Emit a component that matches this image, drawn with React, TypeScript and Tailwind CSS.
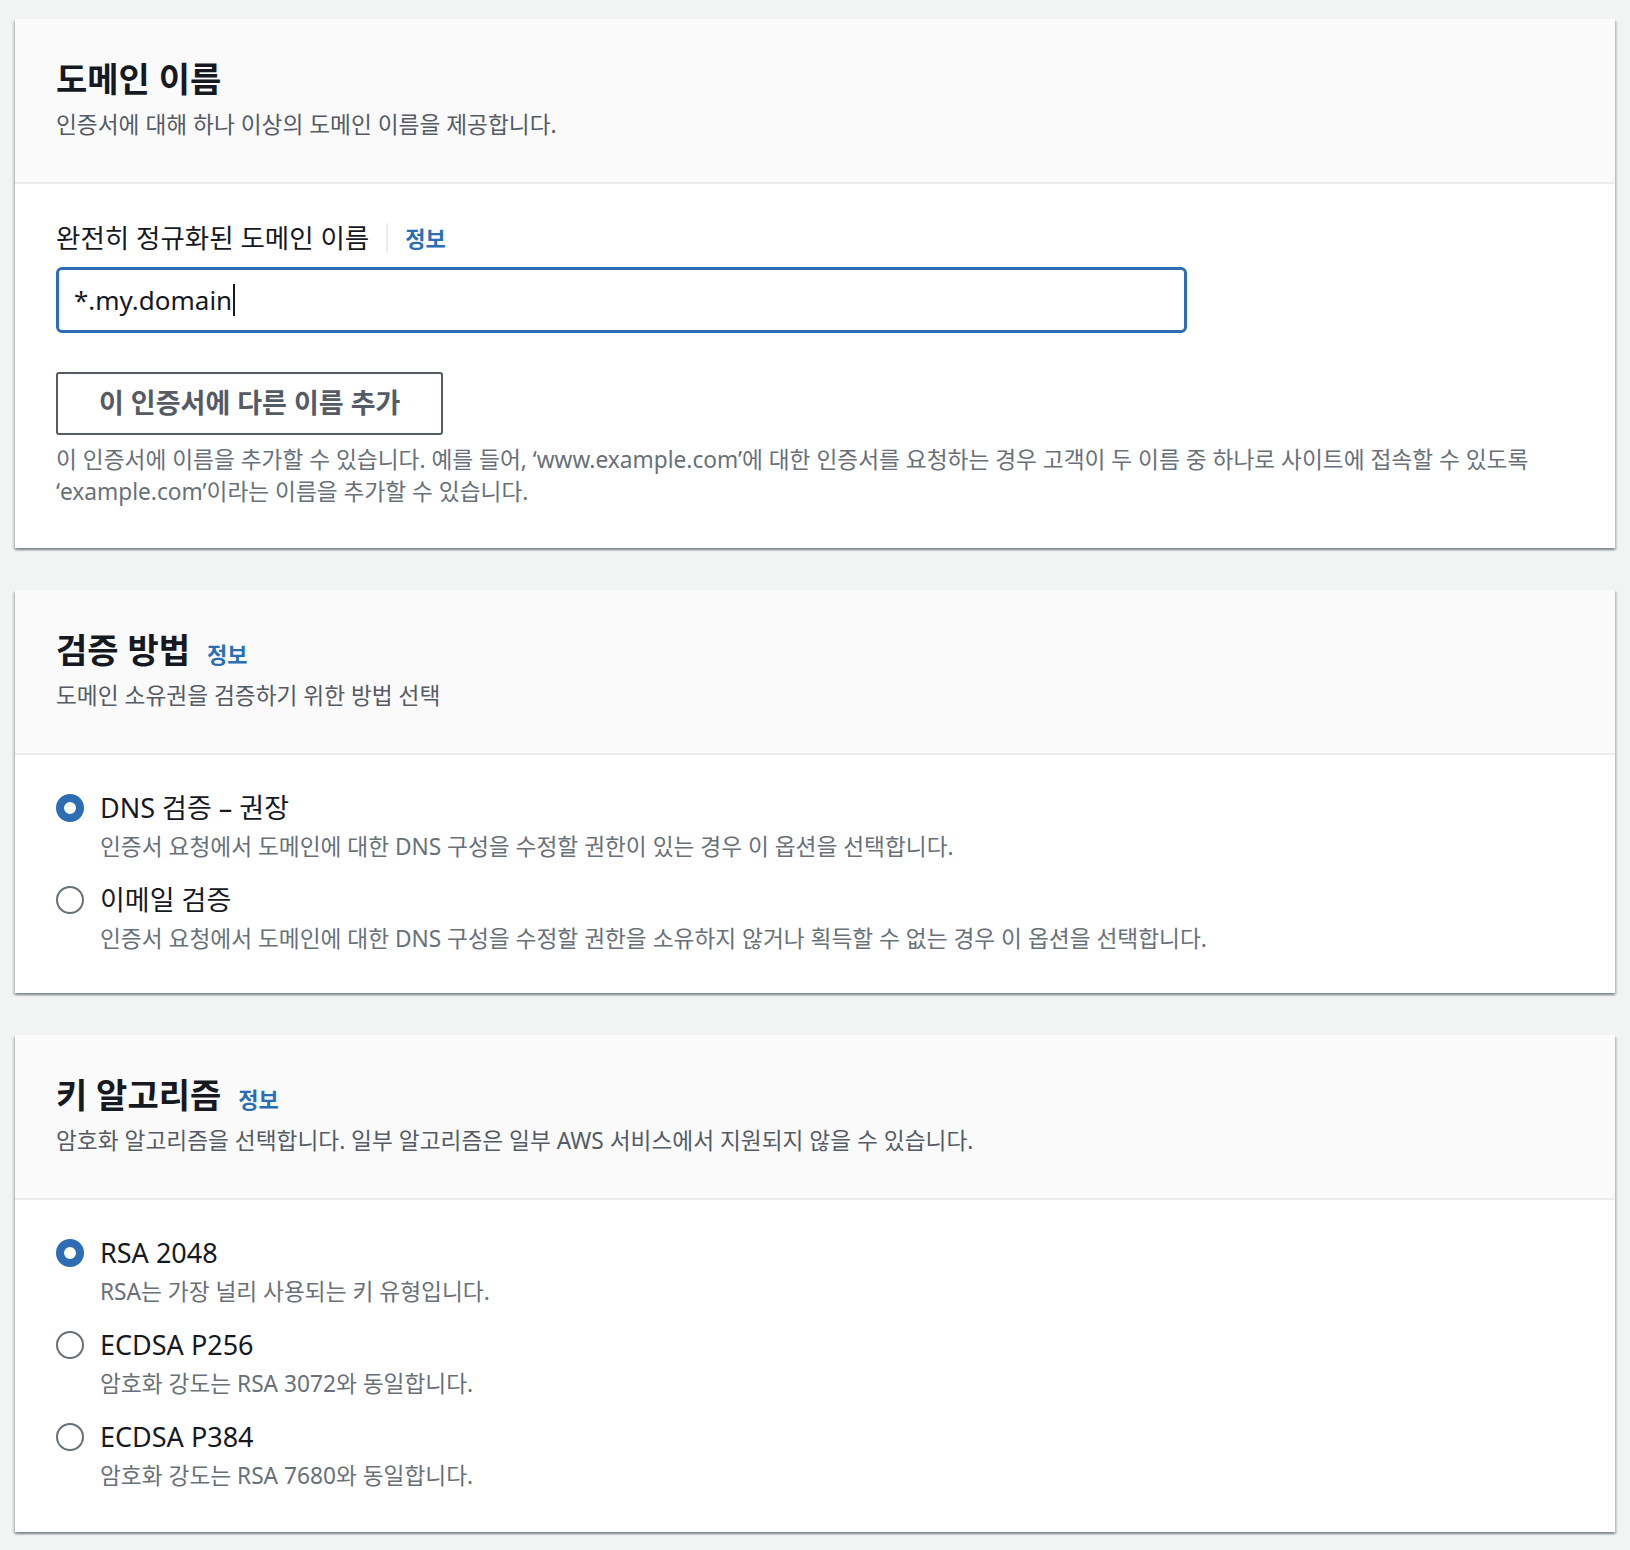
type Option = {
  id: string
  label: string
  description: string
}

const validationOptions: Option[] = [
  {
    id: 'dns',
    label: 'DNS 검증 – 권장',
    description: '인증서 요청에서 도메인에 대한 DNS 구성을 수정할 권한이 있는 경우 이 옵션을 선택합니다.',
  },
  {
    id: 'email',
    label: '이메일 검증',
    description:
      '인증서 요청에서 도메인에 대한 DNS 구성을 수정할 권한을 소유하지 않거나 획득할 수 없는 경우 이 옵션을 선택합니다.',
  },
]

const keyOptions: Option[] = [
  { id: 'rsa', label: 'RSA 2048', description: 'RSA는 가장 널리 사용되는 키 유형입니다.' },
  { id: 'p256', label: 'ECDSA P256', description: '암호화 강도는 RSA 3072와 동일합니다.' },
  { id: 'p384', label: 'ECDSA P384', description: '암호화 강도는 RSA 7680와 동일합니다.' },
]

function InfoLink() {
  return <span className="text-[22px] font-bold leading-[30px] text-[#2a6eb8]">정보</span>
}

function CardHeader({ title, description, info }: { title: string; description: string; info?: boolean }) {
  return (
    <div className="flex flex-col gap-[10px] border-b-2 border-[#eaeded] bg-[#fafafa] px-[41px] pt-[40px] pb-[41px]">
      <div className="flex items-baseline gap-[17px]">
        <h2 className="text-[34px] font-bold leading-[40px] text-[#16191f]">{title}</h2>
        {info && <InfoLink />}
      </div>
      <p className="text-[22.7px] leading-[32px] text-[#545b64]">{description}</p>
    </div>
  )
}

function Card({ children }: { children: React.ReactNode }) {
  return (
    <section className="bg-white shadow-[0_2px_2px_0_rgba(0,28,36,0.3),2px_2px_2px_0_rgba(0,28,36,0.15),-2px_2px_2px_0_rgba(0,28,36,0.15)]">
      {children}
    </section>
  )
}

function RadioGroup({ options, selected }: { options: Option[]; selected: string }) {
  return (
    <div className="flex flex-col gap-[20px]">
      {options.map((opt) => (
        <div key={opt.id} className="flex flex-col gap-[6px]">
          <div className="flex items-center gap-[16px]">
            {opt.id === selected ? (
              <span className="box-border h-[28px] w-[28px] shrink-0 rounded-full border-[8px] border-[#2e6db5] bg-white" />
            ) : (
              <span className="box-border h-[28px] w-[28px] shrink-0 rounded-full border-2 border-[#687078] bg-white" />
            )}
            <span className="text-[27px] leading-[34px] text-[#16191f]">{opt.label}</span>
          </div>
          <p className="pl-[44px] text-[22.7px] leading-[32px] text-[#687078]">{opt.description}</p>
        </div>
      ))}
    </div>
  )
}

export default function App() {
  return (
    <div className="min-h-screen bg-[#f2f3f3] px-[15px] pt-[19px] pb-[19px] font-[family-name:'Noto_Sans','Noto_Sans_CJK_KR',sans-serif]">
      <div className="flex flex-col gap-[42px]">
        {/* Domain name */}
        <Card>
          <CardHeader title="도메인 이름" description="인증서에 대해 하나 이상의 도메인 이름을 제공합니다." />
          <div className="px-[41px] pt-[37px] pb-[40px]">
            <div className="flex items-center">
              <span className="text-[26.5px] leading-[34px] text-[#16191f]">완전히 정규화된 도메인 이름</span>
              <span className="mx-[17px] h-[30px] w-[2px] bg-[#eaeded]" />
              <InfoLink />
            </div>
            <div className="mt-[12px] flex h-[66px] w-[1131px] items-center rounded-[6px] border-[3px] border-[#2e6db5] bg-white px-[15px]">
              <span className="text-[26px] text-[#16191f]">*.my.domain</span>
              <span className="ml-[1px] h-[32px] w-[2px] bg-[#16191f]" />
            </div>
            <button className="mt-[39px] flex h-[63px] items-center rounded-[3px] border-2 border-[#545b64] bg-white px-[41px] text-[27px] font-bold text-[#545b64]">
              이 인증서에 다른 이름 추가
            </button>
            <p className="mt-[9px] text-[22.7px] leading-[32px] text-[#687078]">
              이 인증서에 이름을 추가할 수 있습니다. 예를 들어, ‘www.example.com’에 대한 인증서를 요청하는 경우 고객이 두 이름 중
              하나로 사이트에 접속할 수 있도록 ‘example.com’이라는 이름을 추가할 수 있습니다.
            </p>
          </div>
        </Card>

        {/* Validation method */}
        <Card>
          <CardHeader title="검증 방법" description="도메인 소유권을 검증하기 위한 방법 선택" info />
          <div className="px-[41px] pt-[36px] pb-[38px]">
            <RadioGroup options={validationOptions} selected="dns" />
          </div>
        </Card>

        {/* Key algorithm */}
        <Card>
          <CardHeader
            title="키 알고리즘"
            description="암호화 알고리즘을 선택합니다. 일부 알고리즘은 일부 AWS 서비스에서 지원되지 않을 수 있습니다."
            info
          />
          <div className="px-[41px] pt-[36px] pb-[40px]">
            <RadioGroup options={keyOptions} selected="rsa" />
          </div>
        </Card>
      </div>
    </div>
  )
}
